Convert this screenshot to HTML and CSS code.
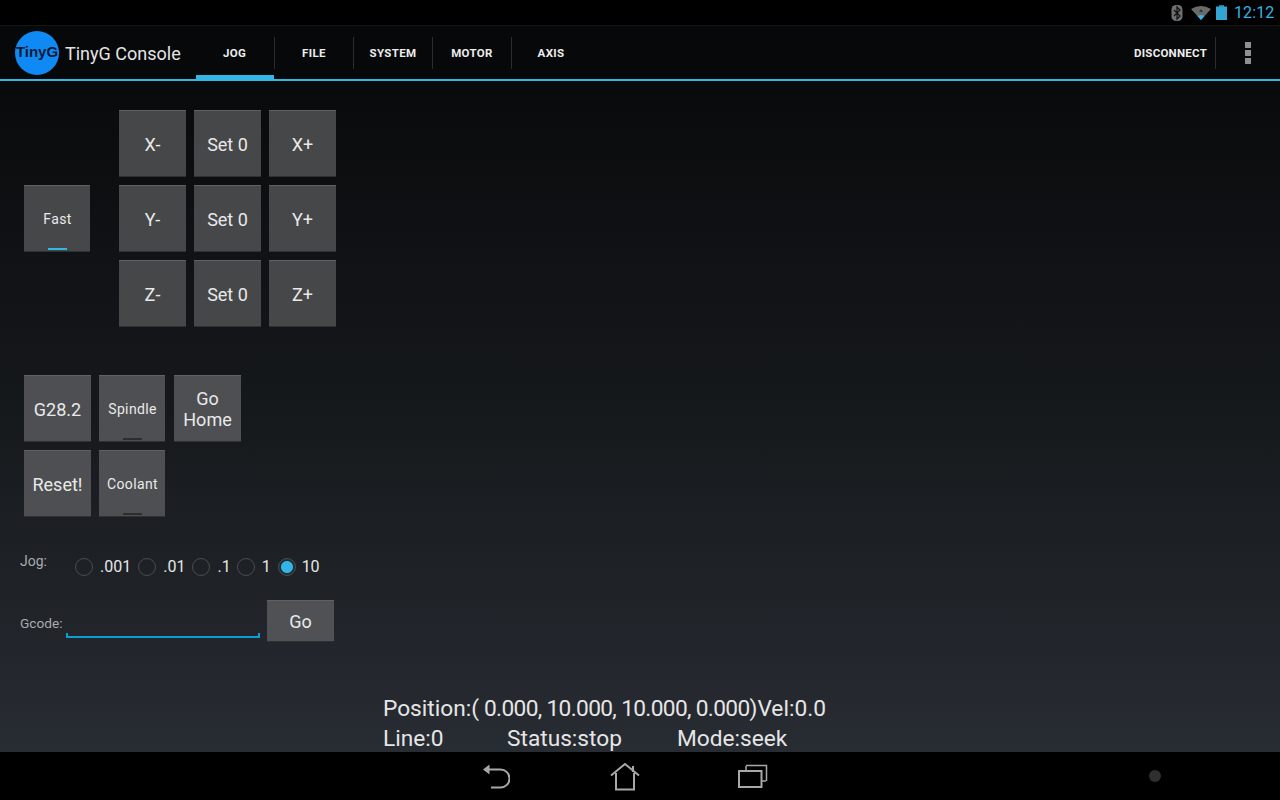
FILE: index.html
```html
<!DOCTYPE html>
<html lang="en">
<head>
<meta charset="utf-8">
<title>TinyG Console</title>
<link rel="stylesheet" href="styles.css">
</head>
<body>
<div class="screen">
  <header class="statusbar">
    <svg class="ic-bt" width="12" height="16" viewBox="0 0 12 16"><rect x="0.5" y="0" width="11" height="16" rx="4.5" fill="#6f6f6f"/><path d="M3 5l6 6-3 3V2l3 3-6 6" fill="none" stroke="#111" stroke-width="1.2"/></svg>
    <svg class="ic-wifi" width="20" height="14" viewBox="0 0 20 14"><path d="M0 3Q10 -3 20 3L10 14Z" fill="#6a6a6a"/><path d="M6.5 10L10 14l3.500-4Q10 8 6.500 10Z" fill="#33b5e5"/><path d="M8 6l2-3 2 3Z" fill="#333"/></svg>
    <svg class="ic-batt" width="11" height="15" viewBox="0 0 11 15"><rect x="3" y="0" width="5" height="2" fill="#1f7fa3"/><rect x="0" y="1.500" width="11" height="13.500" fill="#33a5d0"/></svg>
    <span class="clock">12:12</span>
  </header>
  <nav class="actionbar">
    <div class="logo">TinyG</div>
    <div class="apptitle">TinyG Console</div>
    <div class="tabs">
      <div class="tab tab-active"><span>JOG</span></div>
      <div class="tab"><span>FILE</span></div>
      <div class="tab"><span>SYSTEM</span></div>
      <div class="tab"><span>MOTOR</span></div>
      <div class="tab tab-last"><span>AXIS</span></div>
    </div>
    <div class="actions">
      <div class="action">DISCONNECT</div>
      <div class="overflow"><i></i><i></i><i></i></div>
    </div>
  </nav>
  <main class="content">
    <section class="controls">
      <div class="jogblock">
        <div class="fastcol">
          <button class="btn toggle"><span>Fast</span><i class="ind ind-on"></i></button>
        </div>
        <div class="grid3">
          <button class="btn">X-</button><button class="btn">Set 0</button><button class="btn">X+</button>
          <button class="btn">Y-</button><button class="btn">Set 0</button><button class="btn">Y+</button>
          <button class="btn">Z-</button><button class="btn">Set 0</button><button class="btn">Z+</button>
        </div>
      </div>
      <div class="grid2">
        <button class="btn">G28.2</button>
        <button class="btn toggle"><span>Spindle</span><i class="ind"></i></button>
        <button class="btn btn-two">Go<br>Home</button>
        <button class="btn">Reset!</button>
        <button class="btn toggle"><span>Coolant</span><i class="ind"></i></button>
      </div>
      <div class="jogrow">
        <span class="lbl lbl-jog">Jog:</span>
        <div class="radios">
          <span class="radio r1"><i></i>.001</span>
          <span class="radio r2"><i></i>.01</span>
          <span class="radio r3"><i></i>.1</span>
          <span class="radio r4"><i></i>1</span>
          <span class="radio r5 checked"><i></i>10</span>
        </div>
      </div>
      <div class="gcoderow">
        <span class="lbl lbl-gcode">Gcode:</span>
        <div class="field"></div>
        <button class="btn gobtn">Go</button>
      </div>
    </section>
    <section class="readout">
      <div>Position:(<span class="nums"> 0.000, 10.000, 10.000, 0.000</span>)Vel:0.0</div>
      <div class="line2"><span class="c1">Line:0</span><span class="c2">Status:stop</span><span>Mode:seek</span></div>
    </section>
  </main>
  <footer class="navbar">
    <svg class="n-back" width="28" height="26" viewBox="0 0 28 26"><path d="M7 5.500H18.500A7.500 7.500 0 0 1 18.500 23.500H9" fill="none" stroke="#a8a8a8" stroke-width="2"/><path d="M1 5.500L7.500 0.500V10.500Z" fill="#a8a8a8"/></svg>
    <svg class="n-home" width="30" height="28" viewBox="0 0 30 28"><path d="M1 12.500L15 1 29 12.500" fill="none" stroke="#a8a8a8" stroke-width="2"/><path d="M6 10V26.500H24V10" fill="none" stroke="#a8a8a8" stroke-width="2"/><path d="M23 3V9" stroke="#a8a8a8" stroke-width="2"/></svg>
    <svg class="n-recent" width="30" height="24" viewBox="0 0 30 24"><path d="M8 1.500H28.500V17" fill="none" stroke="#a8a8a8" stroke-width="1.500"/><path d="M8 2V7M24 17H28" fill="none" stroke="#a8a8a8" stroke-width="1.500"/><rect x="1" y="7" width="22.500" height="16" fill="none" stroke="#a8a8a8" stroke-width="2"/></svg>
    <i class="n-dot"></i>
  </footer>
</div>
</body>
</html>
```
FILE: styles.css
```css
* { box-sizing: border-box; }
html, body { margin: 0; padding: 0; background: #000; }
body { font-family: Roboto, "Liberation Sans", sans-serif; color: #e8e8e8; }
.screen { width: 1280px; height: 800px; display: flex; flex-direction: column; overflow: hidden; }

.statusbar { height: 26px; background: #000; border-bottom: 1px solid #161616; display: flex; align-items: center; padding-right: 6px; flex: none; justify-content: flex-end; }
.ic-bt { margin-right: 8px; }
.ic-wifi { margin-right: 5px; margin-top: 1px; }
.ic-batt { margin-right: 7px; }
.clock { color: #33b5e5; font-size: 16px; line-height: 24px; width: 40px; letter-spacing: 0.1px; }

.actionbar { height: 55px; flex: none; display: flex; align-items: stretch; background: #070809; border-bottom: 2px solid #33b5e5; position: relative; }
.logo { width: 44px; height: 44px; margin: 5px 0 0 15px; border-radius: 50%; background: #0f8af5; color: #0b1a33; font-family: "Liberation Sans", sans-serif; font-weight: 700; font-size: 15px; line-height: 42px; text-align: center; white-space: nowrap; }
.apptitle { width: 131px; margin-left: 6px; font-size: 18px; line-height: 55px; color: #e4e4e4; letter-spacing: 0; white-space: nowrap; }
.tabs { display: flex; height: 53px; }
.tab { width: 79px; padding-top: 1px; padding-right: 1px; font-size: 11.500px; font-weight: 700; color: #ededed; display: flex; align-items: center; justify-content: center; position: relative; letter-spacing: 0.35px; }
.tab::after { content: ""; position: absolute; right: 0; top: 11px; height: 32px; width: 1px; background: #2c2c2c; }
.tab-last::after { display: none; }
.tab-active { width: 78px; margin-right: 1px; border-bottom: 4px solid #33b5e5; padding-top: 5px; }
.tab-active::after { right: -1px; }
.actions { margin-left: auto; display: flex; height: 53px; }
.action { width: 82px; font-size: 11.500px; font-weight: 700; color: #ededed; line-height: 55px; white-space: nowrap; position: relative; letter-spacing: 0.25px; }
.action::after { content: ""; position: absolute; right: 0; top: 11px; height: 32px; width: 1px; background: #2c2c2c; }
.overflow { width: 64px; padding: 16px 0 0 29px; display: flex; flex-direction: column; align-items: flex-start; gap: 2px; }
.overflow i { width: 6px; height: 6px; background: #8f8f8f; display: block; }

.content { flex: 1; display: flex; min-height: 0; overflow: hidden; background: linear-gradient(180deg, #090a0c 0%, #16191c 50%, #282c33 100%); }
.controls { width: 383px; flex: none; padding: 29px 0 0 24px; display: flex; flex-direction: column; }
.jogblock { display: flex; align-items: center; gap: 28px; }
.fastcol { width: 67px; }
.grid3 { display: grid; grid-template-columns: repeat(3, 67px); grid-auto-rows: 67px; gap: 8px; }
.grid2 { display: grid; grid-template-columns: repeat(3, 67px); grid-auto-rows: 67px; gap: 8px; margin-top: 48px; }

.btn { width: 67px; height: 67px; padding: 2px 0 0; margin: 0; border: 0; border-top: 1px solid #5f6163; border-bottom: 1px solid #2e3032; background: #454749; color: #e9e9e9; font-family: Roboto, sans-serif; font-size: 18px; line-height: 21px; text-align: center; position: relative; display: block; }
.grid2 .btn { background: #4d4f52; }
.grid2 .btn-two { padding-top: 0; }
.toggle { font-size: 14px; width: 66px; padding-top: 1px; padding-left: 1px; letter-spacing: 0.35px; }
.grid2 .toggle { font-size: 14px; }
.ind { position: absolute; left: 24px; bottom: 1px; width: 19px; height: 2px; background: #2b2d2f; display: block; }
.ind-on { background: #33b5e5; }

.jogrow { display: flex; align-items: flex-start; margin-top: 36px; height: 49px; margin-left: -4px; }
.lbl { font-size: 14px; color: #a9abad; line-height: 16px; }
.lbl-jog { width: 55px; }
.radios { display: flex; font-size: 16px; color: #e6e6e6; line-height: 18px; margin-top: 5px; }
.radio { display: flex; align-items: center; gap: 7px; margin-right: 7px; white-space: nowrap; }
.radio i { width: 18px; height: 18px; border-radius: 50%; border: 1px solid #494c50; display: block; flex: none; }
.r3 { margin-right: 6px; }
.r4 { margin-right: 7px; }
.r5 { gap: 6px; }
.checked i { border: 1px solid #4a4e53; background: radial-gradient(circle, #33b5e5 0 5.500px, #1e2d36 6.500px); }

.gcoderow { display: flex; align-items: flex-start; margin-left: -4px; margin-top: -2px; height: 42px; }
.lbl-gcode { margin-top: 15px; width: 46px; font-size: 13.700px; }
.field { width: 194px; height: 38px; border-bottom: 2px solid #0a9ed4; position: relative; margin-right: 7px; }
.field::before, .field::after { content: ""; position: absolute; bottom: 0; width: 2px; height: 3px; background: #0a9ed4; }
.field::before { left: 0; }
.field::after { right: 0; }
.gobtn { height: 42px; background: #4f5154; padding-top: 1px; }

.readout { flex: 1; display: flex; flex-direction: column; justify-content: flex-end; font-size: 22.700px; line-height: 31px; color: #e6e6e6; margin-bottom: -2px; }
.readout div { height: 31px; white-space: nowrap; }
.readout .line2 { margin-top: -1px; }
.nums { letter-spacing: -0.650px; }
.c1 { display: inline-block; width: 124px; }
.c2 { display: inline-block; width: 170px; }

.navbar { height: 48px; flex: none; background: #000; display: flex; align-items: center; position: relative; padding-left: 482px; }
.n-back { margin-right: 100px; margin-top: 1px; }
.n-home { margin-right: 98px; margin-top: 2px; }
.n-recent { margin-top: 0; }
.n-dot { position: absolute; left: 1149px; top: 18px; width: 12px; height: 12px; border-radius: 50%; background: #2f2f2f; }
```
